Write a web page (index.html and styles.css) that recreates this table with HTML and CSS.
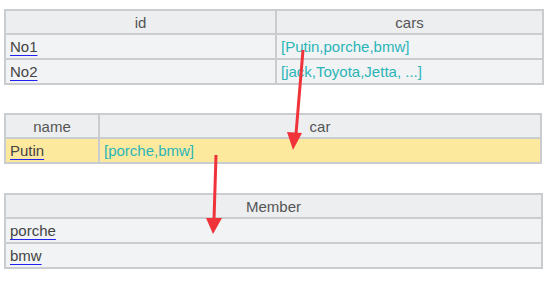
FILE: index.html
```html
<!DOCTYPE html>
<html>
<head>
<meta charset="utf-8">
<link rel="stylesheet" href="styles.css">
</head>
<body>
<div class="page">
  <table class="grid t1">
    <colgroup><col class="c-id"><col></colgroup>
    <tr class="head"><th>id</th><th>cars</th></tr>
    <tr><td><a class="lnk">No1</a></td><td class="val">[Putin,porche,bmw]</td></tr>
    <tr><td><a class="lnk">No2</a></td><td class="val">[jack,Toyota,Jetta, ...]</td></tr>
  </table>
  <table class="grid t2">
    <colgroup><col class="c-name"><col></colgroup>
    <tr class="head"><th>name</th><th>car</th></tr>
    <tr class="sel"><td><a class="lnk">Putin</a></td><td class="val">[porche,bmw]</td></tr>
  </table>
  <table class="grid t3">
    <tr class="head"><th>Member</th></tr>
    <tr><td><a class="lnk">porche</a></td></tr>
    <tr><td><a class="lnk">bmw</a></td></tr>
  </table>
  <svg class="arrows" width="555" height="282" viewBox="0 0 555 282">
    <line x1="303" y1="50" x2="296" y2="134" stroke="#f0333a" stroke-width="3"/>
    <polygon points="287,132 302,133 293,150" fill="#f0333a"/>
    <line x1="216" y1="155" x2="214" y2="220" stroke="#f0333a" stroke-width="3"/>
    <polygon points="206,218 222,218 213,234" fill="#f0333a"/>
  </svg>
</div>
</body>
</html>
```

FILE: styles.css
```css
html, body {
  margin: 0;
  padding: 0;
  background: #ffffff;
}
.page {
  position: relative;
  width: 555px;
  height: 282px;
  padding: 9px 0 0 4px;
  box-sizing: border-box;
  display: flex;
  flex-direction: column;
  font-family: "Liberation Sans", Arial, sans-serif;
  font-size: 15px;
  color: #444;
}
.grid {
  border-collapse: collapse;
  table-layout: fixed;
  background: #f1f3f4;
}
.grid th, .grid td {
  border: 2px solid #c9cdd0;
  padding: 0 4px;
  white-space: nowrap;
  overflow: hidden;
  text-align: left;
}
.grid th {
  background: #eceef0;
  font-weight: normal;
  text-align: center;
  color: #555;
  height: 22px;
}
.grid td {
  height: 23px;
}
.t1 { width: 540px; }
.t1 .c-id { width: 271px; }
.t2 { width: 538px; margin-top: 28px; }
.t2 .c-name { width: 94px; }
.t3 { width: 539px; margin-top: 29px; }
.sel td { background: #fce99e; }
.lnk {
  color: #444;
  text-decoration: underline;
  text-decoration-color: #2222ee;
  text-underline-offset: 3px;
}
.val { color: #2bb5b8; }
.arrows {
  position: absolute;
  left: 0;
  top: 0;
  pointer-events: none;
}
```
